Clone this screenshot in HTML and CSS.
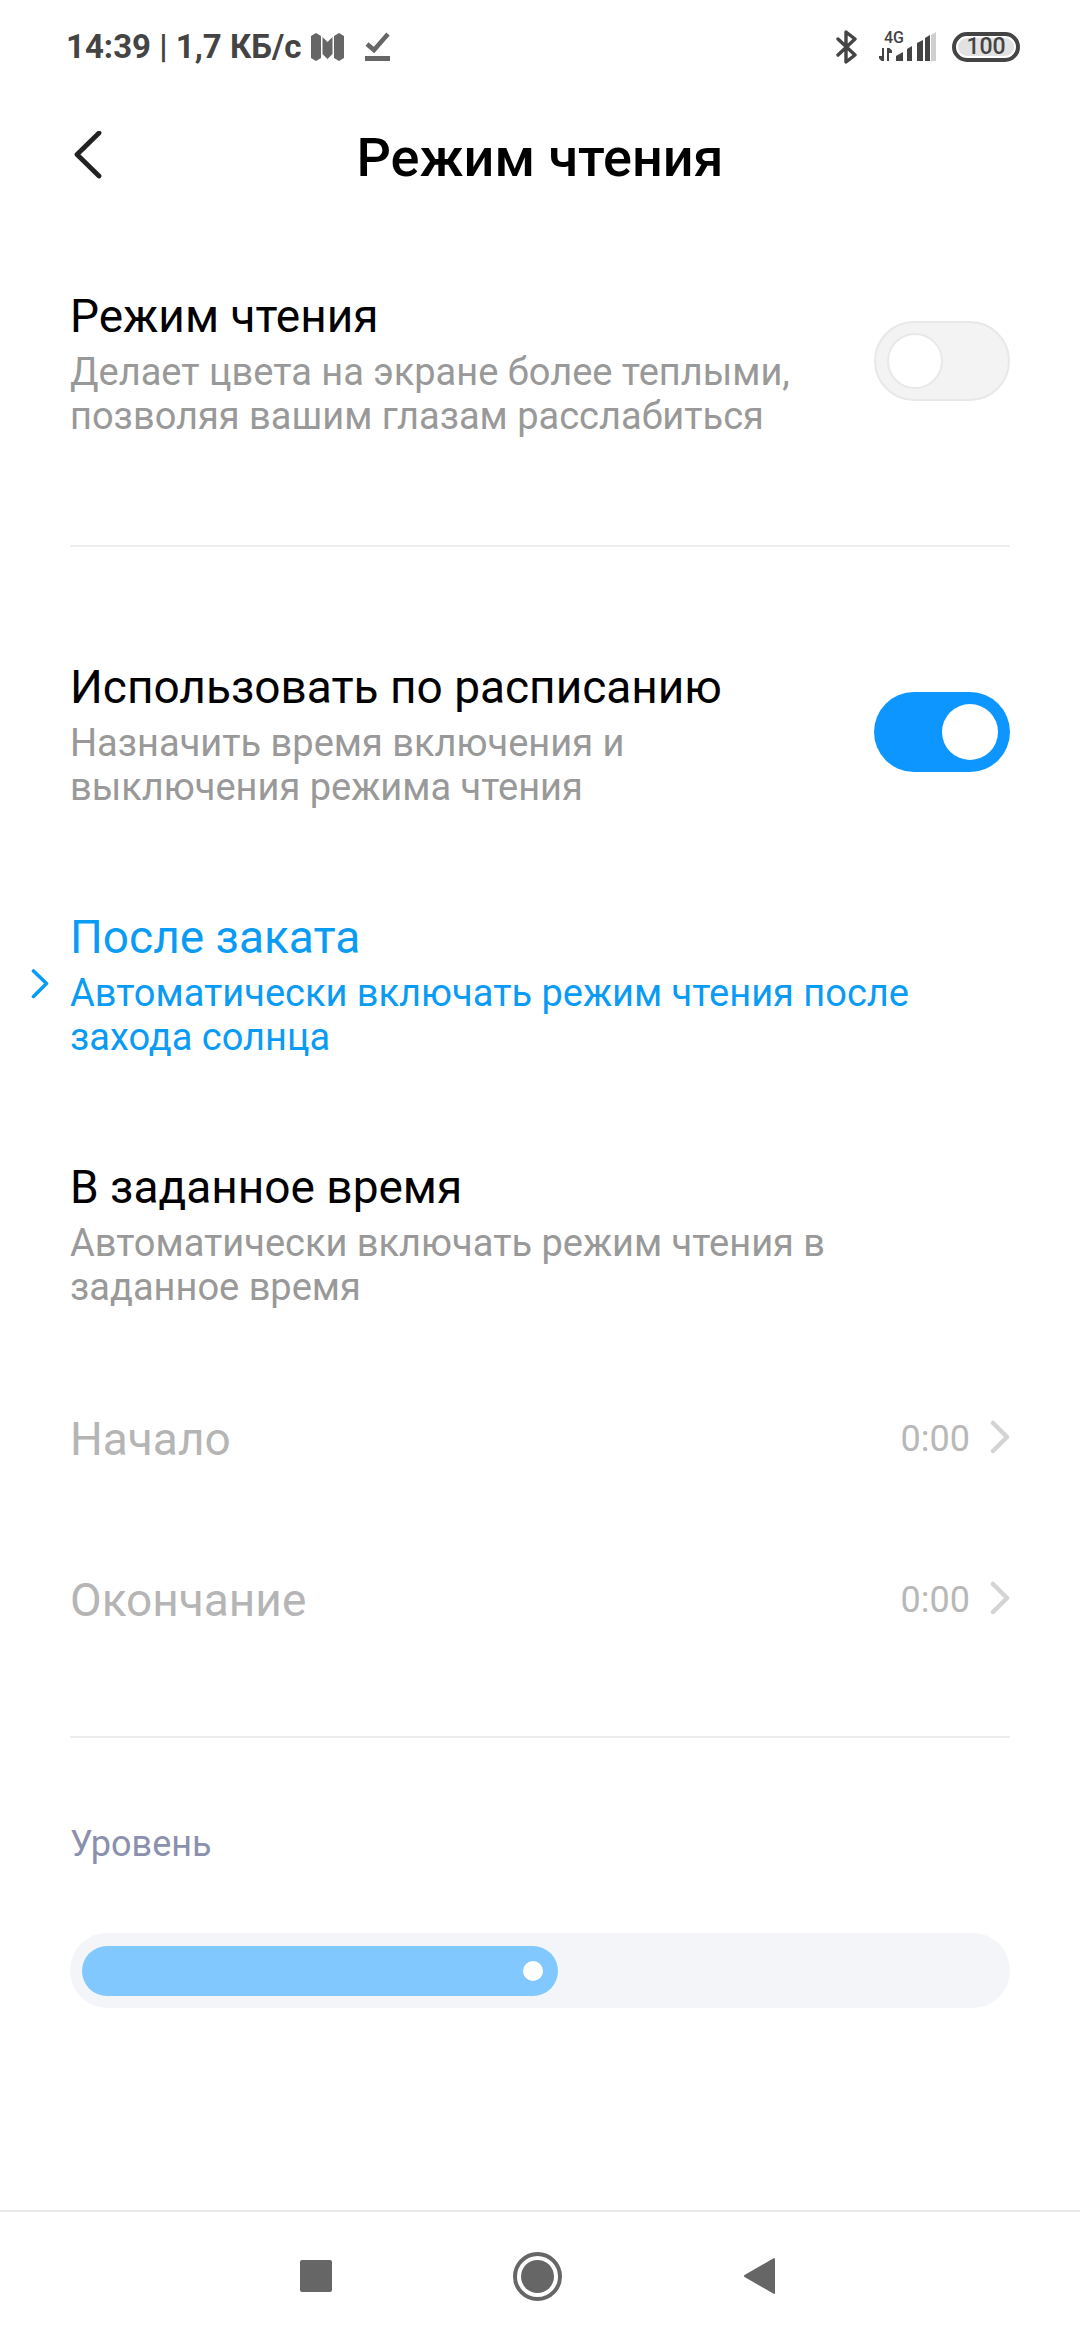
FILE: index.html
```html
<!DOCTYPE html>
<html lang="ru">
<head>
<meta charset="utf-8">
<title>Режим чтения</title>
<link rel="stylesheet" href="styles.css">
</head>
<body>
<div class="screen">
  <div class="status">
    <div class="status-left">
      <span class="status-text">14:39 | 1,7 КБ/с</span>
      <svg class="ic-map" width="35" height="29" viewBox="0 0 35 29"><path d="M1 3 L6 0 L11 3 V25 L6 28 L1 25 Z M24 3 L29 0 L34 3 V25 L29 28 L24 25 Z M12.500 4 L17.500 9 L22.500 4 V21 L17.500 26 L12.500 21 Z" fill="#666"/></svg>
      <svg class="ic-check" width="25" height="30" viewBox="0 0 25 30"><path d="M2 13 L9 19 L23 3" fill="none" stroke="#666" stroke-width="4.500"/><rect x="0" y="25" width="25" height="5" fill="#666"/></svg>
    </div>
    <div class="status-right">
      <svg class="ic-bt" width="22" height="34" viewBox="0 0 22 34"><path d="M2 9 L19 25 L10 32 L10 2 L19 9 L2 25" fill="none" stroke="#444" stroke-width="3.400" stroke-linejoin="round" stroke-linecap="round"/></svg>
      <div class="net">
        <span class="net-label">4G</span>
        <svg class="net-arrows" width="13" height="13" viewBox="0 0 13 13"><path d="M4 0 V13 L0 9 H4 M9 13 V0 L13 4 H9" fill="none" stroke="#444" stroke-width="2"/></svg>
        <svg class="net-bars" width="40" height="30" viewBox="0 0 40 30"><path d="M0 29 V24 L7 20 V29 Z M11 29 V17 L16 14 V29 Z M21 29 V11 L27 8 V29 Z" fill="#444"/><path d="M28 29 V6 L33 3 V29 Z" fill="#444" transform="translate(1 0)"/><path d="M35 29 V3 L40 0 V29 Z" fill="#cfcfcf"/></svg>
      </div>
      <div class="battery"><span class="battery-fill"></span><span class="battery-num">100</span></div>
    </div>
  </div>

  <header class="header">
    <svg class="back" width="28" height="48" viewBox="0 0 28 48"><path d="M25 2 L3 23.500 L25 45" fill="none" stroke="#222" stroke-width="4.800" stroke-linecap="round" stroke-linejoin="round"/></svg>
    <h1 class="page-title">Режим чтения</h1>
  </header>

  <main class="content">
    <section class="row first">
      <div class="row-text">
        <div class="row-title">Режим чтения</div>
        <div class="row-sub">Делает цвета на экране более теплыми,<br>позволяя вашим глазам расслабиться</div>
      </div>
      <div class="toggle off"><span class="knob"></span></div>
    </section>

    <div class="divider div-one"></div>

    <section class="row">
      <div class="row-text">
        <div class="row-title">Использовать по расписанию</div>
        <div class="row-sub">Назначить время включения и<br>выключения режима чтения</div>
      </div>
      <div class="toggle on"><span class="knob"></span></div>
    </section>

    <section class="row gap selected">
      <svg class="sel-mark" width="18" height="30" viewBox="0 0 18 30"><path d="M2.500 2 L15.500 14.500 L2.500 27.500" fill="none" stroke="#0a9bf5" stroke-width="3.600" stroke-linecap="round" stroke-linejoin="round"/></svg>
      <div class="row-text">
        <div class="row-title">После заката</div>
        <div class="row-sub">Автоматически включать режим чтения после<br>захода солнца</div>
      </div>
    </section>

    <section class="row gap">
      <div class="row-text">
        <div class="row-title">В заданное время</div>
        <div class="row-sub">Автоматически включать режим чтения в<br>заданное время</div>
      </div>
    </section>

    <div class="time-list">
      <div class="time-row">
        <span class="time-label">Начало</span>
        <span class="time-value">0:00</span>
        <svg class="time-chev" width="20" height="34" viewBox="0 0 20 34"><path d="M3 3 L17 17 L3 31" fill="none" stroke="#d4d4d4" stroke-width="4.500" stroke-linecap="round" stroke-linejoin="round"/></svg>
      </div>
      <div class="time-row">
        <span class="time-label">Окончание</span>
        <span class="time-value">0:00</span>
        <svg class="time-chev" width="20" height="34" viewBox="0 0 20 34"><path d="M3 3 L17 17 L3 31" fill="none" stroke="#d4d4d4" stroke-width="4.500" stroke-linecap="round" stroke-linejoin="round"/></svg>
      </div>
    </div>

    <div class="divider div-two"></div>

    <div class="level-label">Уровень</div>
    <div class="slider">
      <div class="slider-fill" style="width: 476px"><span class="slider-dot"></span></div>
    </div>
  </main>

  <nav class="navbar">
    <span class="nav-square"></span>
    <span class="nav-home"><span class="nav-home-dot"></span></span>
    <svg class="nav-back" width="33" height="38" viewBox="0 0 33 38"><path d="M31 1 Q32 1 32 2.500 V35.500 Q32 37 31 37 L1.500 20 Q0.500 19 1.500 18 Z" fill="#666"/></svg>
  </nav>
</div>
</body>
</html>
```
FILE: styles.css
```css
* { box-sizing: border-box; }
html, body { margin: 0; padding: 0; background: #fff; }
body { font-family: Roboto, "Liberation Sans", sans-serif; color: #000; }
.screen { width: 1080px; height: 2340px; display: flex; flex-direction: column; overflow: hidden; }

.status { height: 96px; padding: 0 60px 2px 66px; display: flex; justify-content: space-between; align-items: center; flex: none; }
.status-left, .status-right { display: flex; align-items: center; }
.status-text { font-size: 33px; font-weight: 700; color: #444; line-height: 40px; }
.ic-map { margin-left: 9px; }
.ic-check { margin-left: 20px; margin-top: -2px; }
.net { position: relative; width: 57px; height: 30px; margin-left: 21px; margin-right: 16px; }
.net-label { position: absolute; left: 5px; top: -3px; font-size: 16px; font-weight: 500; color: #444; line-height: 18px; }
.net-arrows { position: absolute; left: 0; bottom: 1px; }
.net-bars { position: absolute; right: 0; top: 0; }
.battery { position: relative; width: 68px; height: 30px; border: 4px solid #444; border-radius: 15px; display: flex; align-items: center; justify-content: center; }
.battery-fill { position: absolute; left: 2px; right: 2px; top: 2px; bottom: 2px; background: #e2e2e2; border-radius: 10px; }
.battery-num { position: relative; font-size: 23px; font-weight: 500; color: #444; line-height: 22px; }

.header { height: 124px; position: relative; display: flex; align-items: center; justify-content: center; flex: none; }
.back { position: absolute; left: 74px; top: 35px; }
.page-title { margin: 0; font-size: 54px; font-weight: 500; line-height: 60px; color: #000; }

.content { flex: 1; padding: 68px 70px 0; display: flex; flex-direction: column; }
.row { display: flex; justify-content: space-between; align-items: center; position: relative; height: 150px; flex: none; }
.row.gap { margin-top: 100px; }
.row-title { font-size: 46px; line-height: 56px; color: #000; }
.row-sub { font-size: 38px; line-height: 44px; color: #999; margin-top: 6px; }
.selected .row-title, .selected .row-sub { color: #0a9bf5; }
.sel-mark { position: absolute; left: -39px; top: 60px; }

.toggle { width: 136px; height: 80px; border-radius: 40px; position: relative; flex: none; margin-top: -5px; }
.toggle.off { background: #f3f3f3; border: 2px solid #e8e8e8; }
.toggle.on { background: #0d96ff; }
.knob { position: absolute; width: 56px; height: 56px; border-radius: 50%; background: #fff; top: 12px; }
.off .knob { left: 11px; top: 10px; border: 2px solid #e8e8e8; }
.on .knob { right: 12px; }

.divider { height: 2px; background: #ececec; flex: none; }
.div-one { margin-top: 107px; margin-bottom: 112px; }
.div-two { margin-top: 56px; }

.time-list { margin-top: 49px; display: flex; flex-direction: column; }
.time-row { height: 161px; display: flex; align-items: center; }
.time-label { font-size: 46px; color: #b5b5b5; flex: 1; line-height: 56px; }
.time-value { font-size: 36px; color: #b8b8b8; line-height: 44px; margin-right: 20px; }
.time-chev { margin-top: -4px; }

.level-label { font-size: 36px; line-height: 44px; color: #8a90ad; margin-top: 84px; }
.slider { margin-top: 67px; height: 75px; border-radius: 38px; background: #f3f5f9; padding: 13px 12px; }
.slider-fill { height: 50px; border-radius: 25px; background: #80c8ff; position: relative; }
.slider-dot { position: absolute; right: 15px; top: 15px; width: 20px; height: 20px; border-radius: 50%; background: #fff; }

.navbar { height: 130px; flex: none; border-top: 2px solid #e8e8e8; display: flex; align-items: center; justify-content: space-between; padding: 0 304px 0 300px; }
.nav-square { width: 32px; height: 32px; background: #666; border-radius: 2px; margin-top: -1px; }
.nav-home { width: 49px; height: 49px; border-radius: 50%; border: 4px solid #666; display: flex; align-items: center; justify-content: center; }
.nav-home-dot { width: 33px; height: 33px; background: #666; border-radius: 50%; }
```
